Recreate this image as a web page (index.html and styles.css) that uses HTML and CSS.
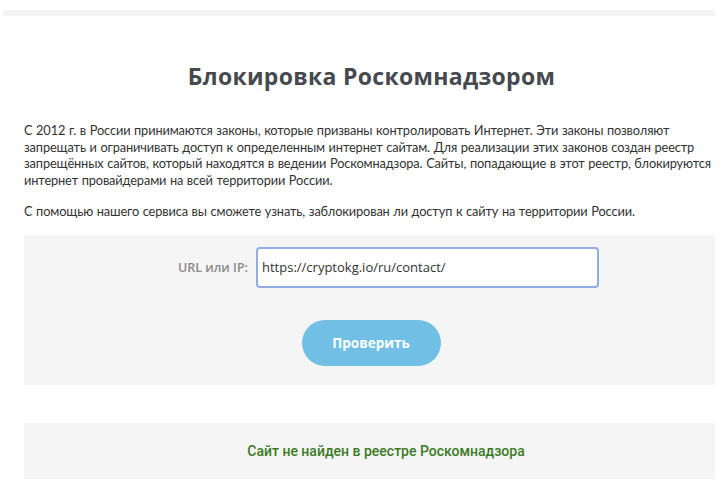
FILE: index.html
```html
<!DOCTYPE html>
<html lang="ru">
<head>
    <meta charset="UTF-8">
    <meta name="viewport" content="width=device-width, initial-scale=1.0">
    <title>Блокировка Роскомнадзором</title>
    <link rel="stylesheet" href="styles.css">
</head>
<body>
    <div class="topbar"></div>
    <div class="container">
        <h1>Блокировка Роскомнадзором</h1>
        <p>С 2012 г. в России принимаются законы, которые призваны контролировать Интернет. Эти законы позволяют запрещать и ограничивать доступ к определенным интернет сайтам. Для реализации этих законов создан реестр запрещённых сайтов, который находятся в ведении Роскомнадзора. Сайты, попадающие в этот реестр, блокируются интернет провайдерами на всей территории России.</p>
        <p>С помощью нашего сервиса вы сможете узнать, заблокирован ли доступ к сайту на территории России.</p>
        <form class="check" id="form">
            <div class="row">
                <label for="url">URL или IP:</label>
                <input type="text" id="url" value="https://cryptokg.io/ru/contact/" autocomplete="off">
            </div>
            <button type="submit">Проверить</button>
        </form>
        <div class="result">Сайт не найден в реестре Роскомнадзора</div>
    </div>
</body>
</html>
```

FILE: styles.css
```css
* {
    margin: 0;
    padding: 0;
    box-sizing: border-box;
}

body {
    background-color: #fff;
    color: #333;
    font-family: Lato, "Open Sans", sans-serif;
    padding: 10px 7px 0 3px;
}

.topbar {
    height: 6px;
    background-color: #f4f4f4;
}

.container {
    margin-left: 21px;
    display: flex;
    flex-direction: column;
}

h1 {
    text-align: center;
    font-family: "Open Sans", sans-serif;
    font-size: 23px;
    font-weight: 700;
    color: #46494e;
    margin-top: 44px;
    margin-bottom: 30px;
    letter-spacing: 0.3px;
    padding-left: 4px;
}

p {
    font-size: 12.8px;
    line-height: 16.6px;
    letter-spacing: -0.13px;
    word-spacing: 0.5px;
    color: #333;
    margin-bottom: 15px;
}

.check {
    background-color: #f5f5f5;
    margin-top: 0;
    padding: 12px 0 19px;
    display: flex;
    flex-direction: column;
    align-items: center;
    gap: 32px;
}

.row {
    display: flex;
    align-items: center;
    gap: 8px;
    margin-left: 38px;
}

.row label {
    font-family: "Open Sans", sans-serif;
    font-size: 12.5px;
    font-weight: 600;
    color: #8a8a8a;
}

.row input {
    width: 343px;
    height: 41px;
    border: 2px solid #92ade5;
    border-radius: 4px;
    padding: 0 4px;
    font-family: "Open Sans", sans-serif;
    font-size: 13px;
    color: #333;
    background: #fff;
}

.check button {
    width: 139px;
    height: 46px;
    margin-left: 3px;
    border: none;
    border-radius: 23px;
    background-color: #72bfe6;
    color: #fff;
    font-family: "Open Sans", sans-serif;
    font-size: 13.5px;
    font-weight: 700;
}

.result {
    margin-top: 38px;
    background-color: #f5f5f5;
    height: 56px;
    padding-left: 33px;
    display: flex;
    align-items: center;
    justify-content: center;
    font-family: Roboto, sans-serif;
    font-size: 14px;
    font-weight: 500;
    color: #3b7a24;
}
```
